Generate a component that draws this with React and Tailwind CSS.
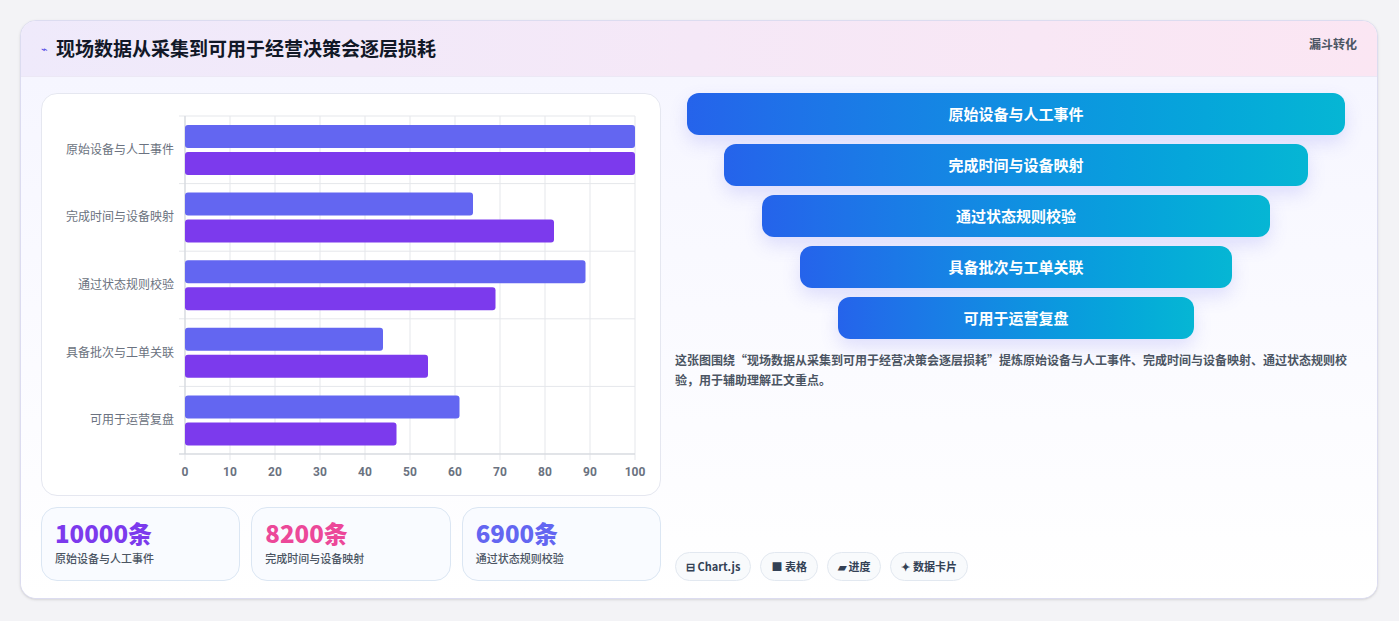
export default function App() {
  const cats = ["原始设备与人工事件", "完成时间与设备映射", "通过状态规则校验", "具备批次与工单关联", "可用于运营复盘"];
  const a = [100, 64, 89, 44, 61];
  const b = [100, 82, 69, 54, 47];
  const x0 = 143, x1 = 593, y0 = 22, y1 = 360;
  const rh = (y1 - y0) / 5;
  const sx = (v) => x0 + ((x1 - x0) * v) / 100;
  const funnel = [658, 584, 508, 432, 356];
  const stats = [
    ["10000条", "原始设备与人工事件", "text-[#7c3aed]"],
    ["8200条", "完成时间与设备映射", "text-[#ec4899]"],
    ["6900条", "通过状态规则校验", "text-[#6366f1]"],
  ];
  const font = { fontFamily: '"Noto Sans CJK SC", "Noto Sans", sans-serif' };
  return (
    <div className="w-[1399px] h-[621px] bg-[#f3f3f6] pt-5 pl-5" style={font}>
      <div className="w-[1358px] h-[579px] rounded-2xl border border-[#dcdcf0] bg-white overflow-hidden flex flex-col shadow-sm">
        <div className="h-14 shrink-0 flex items-center justify-between px-5 bg-gradient-to-r from-[#efeafb] to-[#fbe6f3] border-b border-[#ece8f5]">
          <div className="flex items-center gap-2">
            <span className="text-[#4f46e5] text-[11px]">⌁</span>
            <span className="text-[19px] font-bold text-[#111827]">现场数据从采集到可用于经营决策会逐层损耗</span>
          </div>
          <span className="text-[12px] font-bold text-[#4b5563] self-start mt-[14px]">漏斗转化</span>
        </div>
        <div className="flex-1 flex gap-[14px] px-5 pt-4 pb-[17px] bg-gradient-to-b from-[#f6f6ff] to-white">
          <div className="w-[620px] flex flex-col gap-[11px]">
            <div className="h-[403px] rounded-2xl border border-[#e5e7f0] bg-white">
              <svg width="620" height="403">
                {Array.from({ length: 11 }, (_, i) => (
                  <line key={i} x1={sx(i * 10)} x2={sx(i * 10)} y1={y0} y2={y1 + 6} stroke="#e5e7eb" />
                ))}
                {Array.from({ length: 6 }, (_, i) => (
                  <line key={i} x1={x0 - 6} x2={x1} y1={y0 + rh * i} y2={y0 + rh * i} stroke="#e5e7eb" />
                ))}
                <line x1={x0} x2={x0} y1={y0} y2={y1} stroke="#d1d5db" />
                <line x1={x0 - 6} x2={x1} y1={y1} y2={y1} stroke="#d1d5db" />
                {cats.map((c, i) => {
                  const ry = y0 + rh * i;
                  return (
                    <g key={c}>
                      <rect x={x0} y={ry + 9} width={sx(a[i]) - x0} height={23} rx="3" fill="#6366f1" />
                      <rect x={x0} y={ry + 36} width={sx(b[i]) - x0} height={23} rx="3" fill="#7c3aed" />
                      <text x={x0 - 11} y={ry + rh / 2 + 4} textAnchor="end" fontSize="12" fill="#6b7280">{c}</text>
                    </g>
                  );
                })}
                {Array.from({ length: 11 }, (_, i) => (
                  <text key={i} x={sx(i * 10)} y={382} textAnchor="middle" fontSize="12" fontWeight="700" fill="#6b7280" fontFamily="Roboto, sans-serif">{i * 10}</text>
                ))}
              </svg>
            </div>
            <div className="flex gap-[11px]">
              {stats.map(([v, l, c]) => (
                <div key={l} className="flex-1 h-[74px] rounded-2xl border border-[#dbe6f3] bg-[#f9fbff] px-[13px] pt-[10px]">
                  <div className={`text-[24px] font-extrabold leading-[30px] ${c}`}>{v}</div>
                  <div className="text-[11px] text-[#4b5563] mt-[2px] font-medium">{l}</div>
                </div>
              ))}
            </div>
          </div>
          <div className="flex-1 flex flex-col">
            <div className="flex flex-col items-center gap-[9px]">
              {funnel.map((w, i) => (
                <div key={i} style={{ width: w }} className="h-[42px] rounded-xl bg-gradient-to-r from-[#2563eb] to-[#06b6d4] flex items-center justify-center text-white font-bold text-[15px] shadow-[0_8px_18px_rgba(99,102,241,0.18)]">
                  {cats[i]}
                </div>
              ))}
            </div>
            <p className="mt-[11px] text-[12px] leading-[20px] font-bold text-[#4b5563] pr-2">
              这张图围绕“现场数据从采集到可用于经营决策会逐层损耗”提炼原始设备与人工事件、完成时间与设备映射、通过状态规则校验，用于辅助理解正文重点。
            </p>
            <div className="mt-auto flex gap-[9px]">
              {["⊟ Chart.js", "■ 表格", "▰ 进度", "✦ 数据卡片"].map((t) => (
                <span key={t} className="h-[29px] px-[10px] rounded-full border border-[#e2e8f0] bg-[#f8fafc] text-[11px] font-bold text-[#334155] flex items-center">{t}</span>
              ))}
            </div>
          </div>
        </div>
      </div>
    </div>
  );
}
